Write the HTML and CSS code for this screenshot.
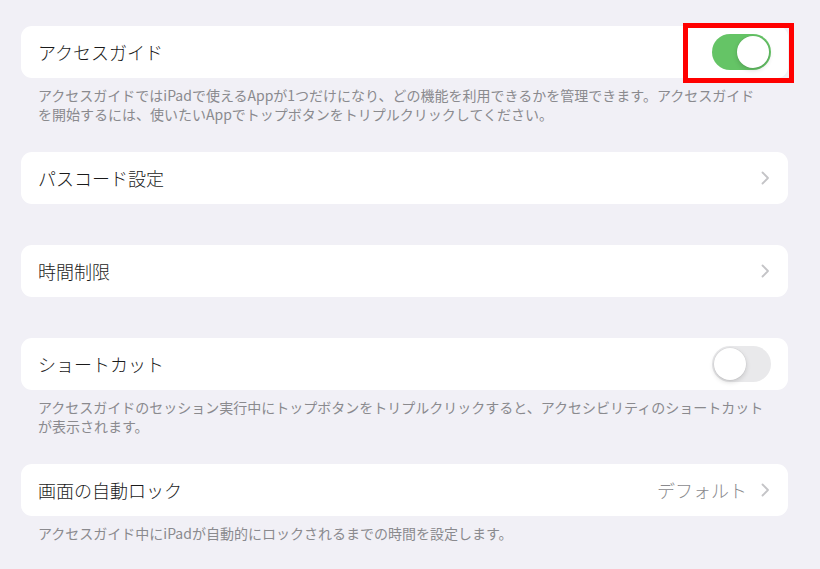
FILE: index.html
```html
<!DOCTYPE html>
<html lang="ja">
<head>
<meta charset="utf-8">
<title>アクセスガイド</title>
<link rel="stylesheet" href="styles.css">
</head>
<body>
<main class="page">
  <section class="group has-footer">
    <div class="card">
      <span class="label">アクセスガイド</span>
      <span class="toggle-wrap">
        <span class="toggle on"><span class="knob"></span></span>
        <span class="highlight"></span>
      </span>
    </div>
    <p class="footer">アクセスガイドではiPadで使えるAppが1つだけになり、どの機能を利用できるかを管理できます。アクセスガイドを開始するには、使いたいAppでトップボタンをトリプルクリックしてください。</p>
  </section>

  <section class="group">
    <div class="card">
      <span class="label">パスコード設定</span>
      <svg class="chevron" width="9" height="14" viewBox="0 0 9 14"><polyline points="1.5,1.5 7,7 1.5,12.5" fill="none" stroke="#c4c4c7" stroke-width="1.8" stroke-linecap="round" stroke-linejoin="round"/></svg>
    </div>
  </section>

  <section class="group">
    <div class="card">
      <span class="label">時間制限</span>
      <svg class="chevron" width="9" height="14" viewBox="0 0 9 14"><polyline points="1.5,1.5 7,7 1.5,12.5" fill="none" stroke="#c4c4c7" stroke-width="1.8" stroke-linecap="round" stroke-linejoin="round"/></svg>
    </div>
  </section>

  <section class="group has-footer">
    <div class="card">
      <span class="label">ショートカット</span>
      <span class="toggle-wrap">
        <span class="toggle off"><span class="knob"></span></span>
      </span>
    </div>
    <p class="footer">アクセスガイドのセッション実行中にトップボタンをトリプルクリックすると、アクセシビリティのショートカットが表示されます。</p>
  </section>

  <section class="group has-footer">
    <div class="card">
      <span class="label">画面の自動ロック</span>
      <span class="trail">
        <span class="value">デフォルト</span>
        <svg class="chevron" width="9" height="14" viewBox="0 0 9 14"><polyline points="1.5,1.5 7,7 1.5,12.5" fill="none" stroke="#c4c4c7" stroke-width="1.8" stroke-linecap="round" stroke-linejoin="round"/></svg>
      </span>
    </div>
    <p class="footer">アクセスガイド中にiPadが自動的にロックされるまでの時間を設定します。</p>
  </section>
</main>
</body>
</html>
```

FILE: styles.css
```css
* { box-sizing: border-box; }

html, body {
  margin: 0;
  padding: 0;
  background: #f1f0f6;
}

body {
  font-family: "Noto Sans CJK JP", "Noto Sans", sans-serif;
  color: #000;
  width: 820px;
  height: 569px;
  overflow: hidden;
}

.page {
  display: flex;
  flex-direction: column;
  padding: 26px 32px 0 21px;
}

.group + .group { margin-top: 41px; }
.group.has-footer + .group { margin-top: 28px; }

.card {
  height: 52px;
  background: #fff;
  border-radius: 11px;
  display: flex;
  align-items: center;
  justify-content: space-between;
  padding: 0 18px 0 17px;
}

.label {
  font-size: 18px;
  line-height: 24px;
  font-weight: 300;
  color: #1a1a1a;
}

.footer {
  margin: 0;
  padding: 8px 0 0 17px;
  width: 747px;
  font-size: 14px;
  line-height: 19px;
  font-weight: 400;
  color: #8a8a8e;
}

.chevron { display: block; }

.trail {
  display: flex;
  align-items: center;
  gap: 14px;
}

.value {
  font-size: 18px;
  line-height: 24px;
  font-weight: 300;
  color: #8a8a8e;
}

.toggle-wrap {
  position: relative;
  display: block;
  margin-right: -1px;
}

.toggle {
  display: flex;
  align-items: center;
  width: 59px;
  height: 36px;
  border-radius: 18px;
  padding: 2px;
}

.toggle.on {
  background: #65c466;
  justify-content: flex-end;
}

.toggle.off {
  background: #e9e9eb;
  justify-content: flex-start;
}

.knob {
  width: 32px;
  height: 32px;
  border-radius: 50%;
  background: #fff;
  box-shadow: 0 2px 5px rgba(0,0,0,0.16), 0 0 0 0.5px rgba(0,0,0,0.05);
}

.highlight {
  position: absolute;
  left: -29px;
  top: -11px;
  right: -23px;
  bottom: -13px;
  border: 5px solid #ff0000;
  pointer-events: none;
}
```
